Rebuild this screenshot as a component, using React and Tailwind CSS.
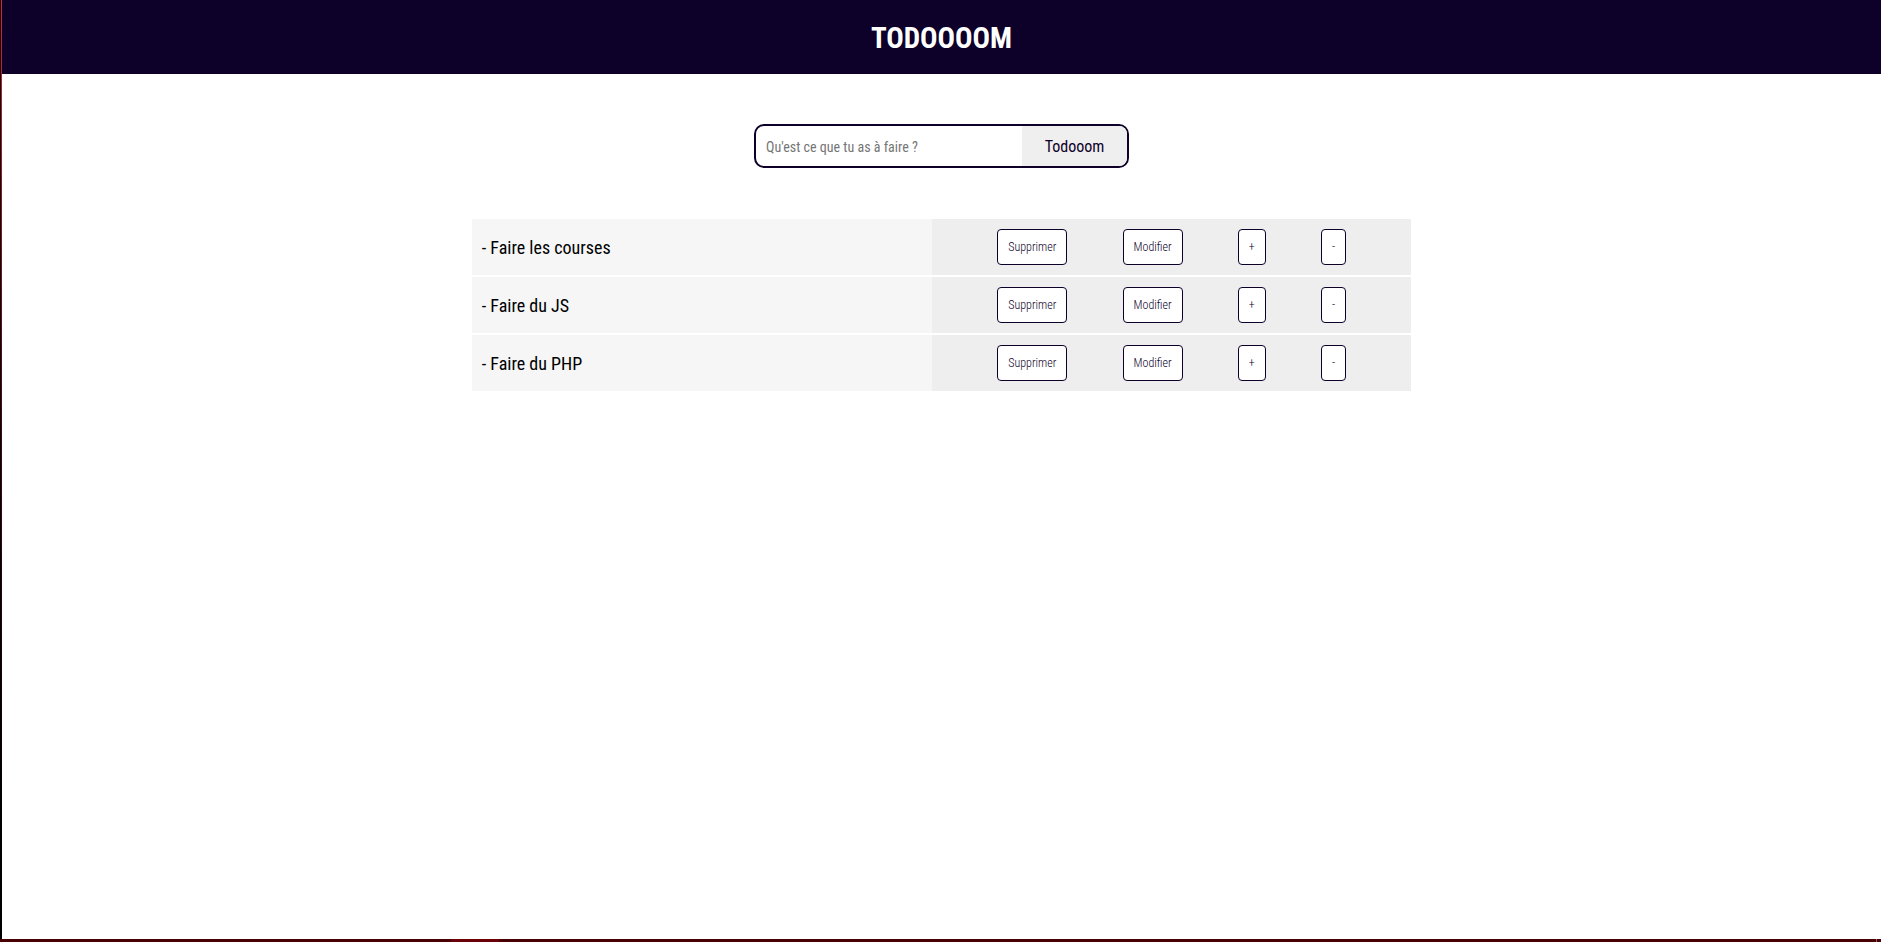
import { useState } from "react";

const tasks = ["Faire les courses", "Faire du JS", "Faire du PHP"];

function ActionButton({ children, label }) {
  return (
    <button
      type="button"
      aria-label={label}
      className="h-9 rounded border border-[#0d0029] bg-white px-2.5 text-xs font-light text-[#0d0029]"
    >
      {children}
    </button>
  );
}

function TaskRow({ name }) {
  return (
    <li className="flex h-14">
      <p className="flex w-[49%] items-center bg-[#f6f6f6] px-2.5 pt-0.5 text-lg text-black">- {name}</p>
      <div className="flex flex-1 items-center justify-evenly bg-[#eeeeee] px-2.5">
        <ActionButton>Supprimer</ActionButton>
        <ActionButton>Modifier</ActionButton>
        <ActionButton label="Monter">+</ActionButton>
        <ActionButton label="Descendre">-</ActionButton>
      </div>
    </li>
  );
}

export default function App() {
  const [value, setValue] = useState("");
  return (
    <div className="flex min-h-screen flex-col bg-white font-['Roboto_Condensed','Roboto',sans-serif]">
      <div className="flex flex-1">
        <div className="w-px bg-black" />
        <div className="w-px bg-linear-to-b from-[#e0203c] via-[#50001c] via-45% to-black" />
        <div className="flex-1">
          <header className="flex h-[74px] items-center justify-center bg-[#0d0029] pt-1">
            <h1 className="text-[29px] font-bold text-white">TODOOOOM</h1>
          </header>
          <main className="flex flex-col items-center">
            <form
              onSubmit={(e) => e.preventDefault()}
              className="mt-[50px] flex h-11 w-[375px] overflow-hidden rounded-[10px] border-2 border-[#0d0029]"
            >
              <input
                type="text"
                aria-label="Nouvelle tâche"
                value={value}
                onChange={(e) => setValue(e.target.value)}
                placeholder="Qu'est ce que tu as à faire ?"
                className="min-w-0 flex-1 px-2.5 pt-0.5 text-sm text-black outline-none placeholder:text-[#757575]"
              />
              <button type="submit" className="w-[105px] bg-[#efefef] pt-0.5 text-base text-[#0d0029]">
                Todooom
              </button>
            </form>
            <ul className="mt-[51px] flex w-1/2 flex-col gap-0.5">
              {tasks.map((name) => (
                <TaskRow key={name} name={name} />
              ))}
            </ul>
          </main>
        </div>
      </div>
      <div className="flex h-[3px] bg-[#480005]">
        <div className="w-[24%]" />
        <div className="w-12 bg-[#6c0007]" />
        <div className="mr-1 ml-auto w-px bg-[#9c6064]" />
      </div>
    </div>
  );
}
